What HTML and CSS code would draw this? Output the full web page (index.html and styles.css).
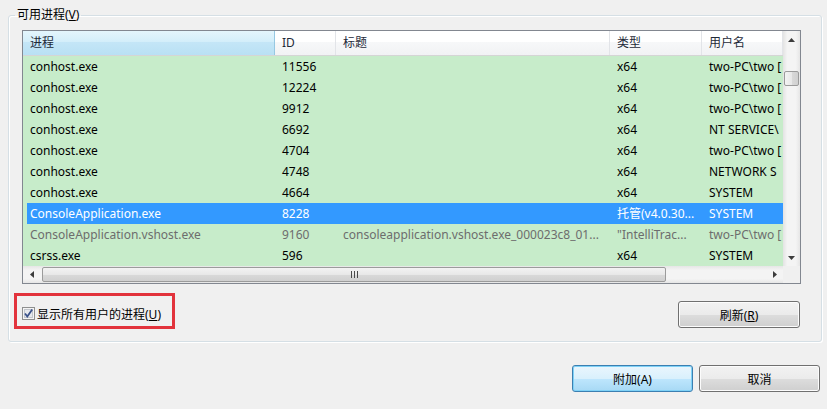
FILE: index.html
```html
<!DOCTYPE html>
<html lang="zh-CN">

<head>
    <meta charset="UTF-8">
    <title>附加到进程</title>
    <link rel="stylesheet" href="styles.css">
</head>

<body>
    <div class="dialog">
        <fieldset class="group">
            <legend>可用进程(<u>V</u>)</legend>

            <div class="list">
                <div class="list-main">
                    <div class="head">
                        <div class="hcell sorted">进程</div>
                        <div class="hcell">ID</div>
                        <div class="hcell">标题</div>
                        <div class="hcell">类型</div>
                        <div class="hcell">用户名</div>
                    </div>
                    <div class="row"><span>conhost.exe</span><span>11556</span><span></span><span>x64</span><span>two-PC\two [</span></div>
                    <div class="row"><span>conhost.exe</span><span>12224</span><span></span><span>x64</span><span>two-PC\two [</span></div>
                    <div class="row"><span>conhost.exe</span><span>9912</span><span></span><span>x64</span><span>two-PC\two [</span></div>
                    <div class="row"><span>conhost.exe</span><span>6692</span><span></span><span>x64</span><span>NT SERVICE\</span></div>
                    <div class="row"><span>conhost.exe</span><span>4704</span><span></span><span>x64</span><span>two-PC\two [</span></div>
                    <div class="row"><span>conhost.exe</span><span>4748</span><span></span><span>x64</span><span>NETWORK S</span></div>
                    <div class="row"><span>conhost.exe</span><span>4664</span><span></span><span>x64</span><span>SYSTEM</span></div>
                    <div class="row sel"><span>ConsoleApplication.exe</span><span>8228</span><span></span><span>托管(v4.0.30...</span><span>SYSTEM</span></div>
                    <div class="row dim"><span>ConsoleApplication.vshost.exe</span><span>9160</span><span>consoleapplication.vshost.exe_000023c8_01...</span><span>"IntelliTrac...</span><span>two-PC\two [</span></div>
                    <div class="row"><span>csrss.exe</span><span>596</span><span></span><span>x64</span><span>SYSTEM</span></div>
                </div>

                <div class="vbar">
                    <div class="sb-btn">
                        <svg width="7" height="4" viewBox="0 0 7 4"><path d="M3.5 0 L7 4 L0 4 Z" fill="#3c3c3c"/></svg>
                    </div>
                    <div class="v-track"><div class="v-thumb"></div></div>
                    <div class="sb-btn">
                        <svg width="7" height="4" viewBox="0 0 7 4"><path d="M0 0 L7 0 L3.5 4 Z" fill="#3c3c3c"/></svg>
                    </div>
                </div>

                <div class="hbar">
                    <div class="sb-btn">
                        <svg width="4" height="7" viewBox="0 0 4 7"><path d="M0 3.5 L4 0 L4 7 Z" fill="#3c3c3c"/></svg>
                    </div>
                    <div class="h-track">
                        <div class="h-thumb">
                            <svg width="7" height="7" viewBox="0 0 7 7"><path d="M0.5 0 V7 M3.5 0 V7 M6.5 0 V7" stroke="#4a4a4a" stroke-width="1"/></svg>
                        </div>
                    </div>
                    <div class="sb-btn">
                        <svg width="4" height="7" viewBox="0 0 4 7"><path d="M0 0 L4 3.5 L0 7 Z" fill="#3c3c3c"/></svg>
                    </div>
                </div>

                <div class="corner"></div>
            </div>

            <div class="foot">
                <label class="mark">
                    <svg class="check" width="13" height="13" viewBox="0 0 13 13">
                        <rect x="0.5" y="0.5" width="12" height="12" fill="#f4f4f4" stroke="#8e8f8f"/>
                        <rect x="2.5" y="2.5" width="8" height="8" fill="#e6e8ec" stroke="#c2c6cc"/>
                        <path d="M3 6.5 L5.3 9.5 L10.2 2.6" fill="none" stroke="#3a528a" stroke-width="1.8"/>
                    </svg>
                    <span>显示所有用户的进程(<u>U</u>)</span>
                </label>
                <button class="btn refresh">刷新(<u>R</u>)</button>
            </div>
        </fieldset>

        <div class="actions">
            <button class="btn primary">附加(A)</button>
            <button class="btn">取消</button>
        </div>
    </div>
</body>

</html>
```

FILE: styles.css
```css
body {
    margin: 0;
    background-color: #f0f0f0;
    font-family: "Noto Sans", "Noto Sans CJK SC", sans-serif;
    font-size: 12px;
    color: #000;
    overflow: hidden;
}

.dialog {
    padding: 7px 5px 0 8px;
}

.group {
    margin: 0;
    padding: 7px 20px 12px 13px;
    border: 1px solid #d5dfe5;
    border-radius: 3px;
    box-shadow: inset 1px 1px 0 #fff, 1px 1px 0 #fff;
}

.group legend {
    margin-left: -7px;
    padding: 0 2px;
    line-height: 16px;
}

/* list view */

.list {
    display: grid;
    grid-template-columns: 760px 17px;
    grid-template-rows: 235px 17px;
    width: max-content;
    border: 1px solid #828790;
    background-color: #c7ecca;
}

.list-main {
    overflow: hidden;
}

.head,
.row {
    display: grid;
    grid-template-columns: 252px 61px 274px 92px 81px;
}

.head {
    height: 25px;
    box-sizing: border-box;
    border-bottom: 1px solid #d5d5d5;
    background: linear-gradient(#ffffff, #ffffff 45%, #f7f8f9 46%, #f1f2f4);
}

.hcell {
    padding-left: 7px;
    line-height: 24px;
    border-right: 1px solid #e2e4e8;
    color: #1e2a38;
    white-space: nowrap;
    overflow: hidden;
}

.hcell.sorted {
    background: linear-gradient(#e4f5fc, #d3eefa 45%, #c4e6f7 46%, #b9e0f4);
    border-right-color: #96c8e2;
}

.row {
    height: 21px;
    line-height: 21px;
}

.row span {
    padding-left: 7px;
    white-space: nowrap;
    overflow: hidden;
}

.row.sel {
    background: linear-gradient(to right, transparent 4px, #3399ff 4px);
    color: #fff;
}

.row.dim {
    color: #6d6d6d;
}

/* scroll bars */

.vbar {
    display: flex;
    flex-direction: column;
    background: linear-gradient(to right, #e3e3e3, #f4f4f4 25%, #f4f4f4 75%, #e6e6e6);
}

.hbar {
    display: flex;
    background: linear-gradient(#e6e6e6, #f4f4f4 25%, #f4f4f4 75%, #e6e6e6);
}

.sb-btn {
    width: 17px;
    height: 17px;
    flex: none;
    display: flex;
    align-items: center;
    justify-content: center;
}

.v-track {
    flex: 1;
}

.v-thumb {
    margin: 23px 1px 0 1px;
    height: 15px;
    box-sizing: border-box;
    border: 1px solid #9b9b9b;
    border-radius: 2px;
    background: linear-gradient(to right, #f3f3f3, #e8e8e8 50%, #d9d9d9 51%, #d0d0d0);
}

.h-track {
    flex: 1;
}

.h-thumb {
    margin: 1px 0 0 2px;
    width: 624px;
    height: 15px;
    box-sizing: border-box;
    border: 1px solid #9b9b9b;
    border-radius: 2px;
    background: linear-gradient(#f3f3f3, #e8e8e8 50%, #d9d9d9 51%, #d0d0d0);
    display: flex;
    align-items: center;
    justify-content: center;
}

.corner {
    background-color: #f0f0f0;
}

/* checkbox + refresh */

.foot {
    display: flex;
    justify-content: space-between;
    align-items: flex-start;
    margin-top: 9px;
}

.mark {
    margin-left: -8px;
    width: 161px;
    height: 36px;
    box-sizing: border-box;
    border: 3px solid #e2333c;
    display: flex;
    align-items: center;
    gap: 2px;
    padding: 5px 0 0 5px;
}

.check {
    flex: none;
}

/* buttons */

.btn {
    font-family: "Noto Sans", "Noto Sans CJK SC", sans-serif;
    font-size: 12px;
    color: #000;
    width: 121px;
    height: 27px;
    padding: 0;
    border: 1px solid #707070;
    border-radius: 3px;
    background: linear-gradient(#f2f2f2, #ebebeb 50%, #dddddd 51%, #cfcfcf);
    box-shadow: inset 0 0 0 1px #fcfcfc;
}

.btn.refresh {
    width: 122px;
    margin-top: 8px;
    margin-right: 1px;
}

.btn.primary {
    border-color: #3c7fb1;
    background: linear-gradient(#eaf6fd, #d9f0fc 50%, #bee6fd 51%, #a7d9f5);
    box-shadow: inset 0 0 0 1px #7fd2f7;
}

.actions {
    display: flex;
    justify-content: flex-end;
    gap: 6px;
    margin-top: 23px;
    padding-right: 2px;
}
```
